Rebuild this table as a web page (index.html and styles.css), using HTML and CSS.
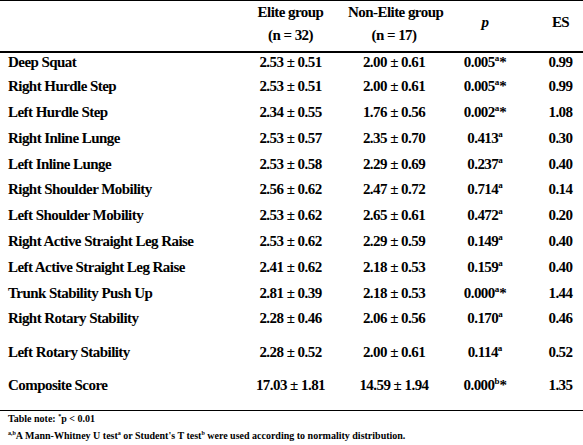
FILE: index.html
```html
<!DOCTYPE html>
<html>
<head>
<meta charset="utf-8">
<link rel="stylesheet" href="styles.css">
</head>
<body>
<table class="fms">
  <thead>
    <tr class="head">
      <th class="label"></th>
      <th class="c1"><div class="h1">Elite group</div><div class="h2">(n = 32)</div></th>
      <th class="c2"><div class="h1">Non-Elite group</div><div class="h2">(n = 17)</div></th>
      <th class="c3"><i>p</i></th>
      <th class="c4">ES</th>
    </tr>
  </thead>
  <tbody>
    <tr class="r"><td class="label">Deep Squat</td><td>2.53 ± 0.51</td><td>2.00 ± 0.61</td><td>0.005<sup>a</sup>*</td><td>0.99</td></tr>
    <tr class="r"><td class="label">Right Hurdle Step</td><td>2.53 ± 0.51</td><td>2.00 ± 0.61</td><td>0.005<sup>a</sup>*</td><td>0.99</td></tr>
    <tr class="r"><td class="label">Left Hurdle Step</td><td>2.34 ± 0.55</td><td>1.76 ± 0.56</td><td>0.002<sup>a</sup>*</td><td>1.08</td></tr>
    <tr class="r"><td class="label">Right Inline Lunge</td><td>2.53 ± 0.57</td><td>2.35 ± 0.70</td><td>0.413<sup>a</sup></td><td>0.30</td></tr>
    <tr class="r"><td class="label">Left Inline Lunge</td><td>2.53 ± 0.58</td><td>2.29 ± 0.69</td><td>0.237<sup>a</sup></td><td>0.40</td></tr>
    <tr class="r"><td class="label">Right Shoulder Mobility</td><td>2.56 ± 0.62</td><td>2.47 ± 0.72</td><td>0.714<sup>a</sup></td><td>0.14</td></tr>
    <tr class="r"><td class="label">Left Shoulder Mobility</td><td>2.53 ± 0.62</td><td>2.65 ± 0.61</td><td>0.472<sup>a</sup></td><td>0.20</td></tr>
    <tr class="r"><td class="label">Right Active Straight Leg Raise</td><td>2.53 ± 0.62</td><td>2.29 ± 0.59</td><td>0.149<sup>a</sup></td><td>0.40</td></tr>
    <tr class="r"><td class="label">Left Active Straight Leg Raise</td><td>2.41 ± 0.62</td><td>2.18 ± 0.53</td><td>0.159<sup>a</sup></td><td>0.40</td></tr>
    <tr class="r"><td class="label">Trunk Stability Push Up</td><td>2.81 ± 0.39</td><td>2.18 ± 0.53</td><td>0.000<sup>a</sup>*</td><td>1.44</td></tr>
    <tr class="r tall"><td class="label">Right Rotary Stability</td><td>2.28 ± 0.46</td><td>2.06 ± 0.56</td><td>0.170<sup>a</sup></td><td>0.46</td></tr>
    <tr class="r mid"><td class="label">Left Rotary Stability</td><td>2.28 ± 0.52</td><td>2.00 ± 0.61</td><td>0.114<sup>a</sup></td><td>0.52</td></tr>
    <tr class="r last"><td class="label">Composite Score</td><td>17.03 ± 1.81</td><td>14.59 ± 1.94</td><td>0.000<sup>b</sup>*</td><td>1.35</td></tr>
  </tbody>
</table>
<div class="notes">
  <p class="note">Table note: <sup>*</sup>p &lt; 0.01</p>
  <p class="note n2"><sup>a,b</sup>A Mann-Whitney U test<sup>a</sup> or Student's T test<sup>b</sup> were used according to normality distribution.</p>
</div>
</body>
</html>
```
FILE: styles.css
```css
html, body {
  margin: 0;
  padding: 0;
  background: #ffffff;
}
body {
  width: 583px;
  height: 445px;
  overflow: hidden;
  font-family: "Liberation Serif", "Times New Roman", serif;
  font-weight: bold;
  color: #000;
}
.fms {
  width: 583px;
  border-collapse: collapse;
  table-layout: fixed;
  font-size: 15px;
  letter-spacing: -0.55px;
}
.fms th, .fms td {
  padding: 0;
  text-align: center;
  white-space: nowrap;
}
.fms th.label, .fms td.label {
  text-align: left;
  padding-left: 8px;
  width: 225px;
}
.c1 { width: 115px; }
.c2 { width: 92px; }
.c3 { width: 90px; }
.c4 { width: 61px; }
.head {
  height: 51px;
  border-top: 1px solid #000;
  border-bottom: 2px solid #000;
}
.head th { vertical-align: top; }
.head .h1 { padding-top: 2px; line-height: 18px; }
.head .h2 { padding-top: 5px; line-height: 18px; }
.head .c3, .head .c4 { vertical-align: middle; padding-bottom: 6px; }
.r { height: 25.8px; }
.r td { vertical-align: top; line-height: 18px; }
.r.tall { height: 34px; }
.r.mid { height: 33px; }
.r.last { height: 34px; border-bottom: 1.5px solid #000; }
sup {
  font-size: 0.6em;
  line-height: 0;
  vertical-align: super;
  letter-spacing: 0;
}
.notes {
  padding: 1px 0 0 8px;
}
.note {
  margin: 0;
  font-size: 10px;
  letter-spacing: 0;
  line-height: 14px;
}
.n2 { margin-top: 3px; }
```
